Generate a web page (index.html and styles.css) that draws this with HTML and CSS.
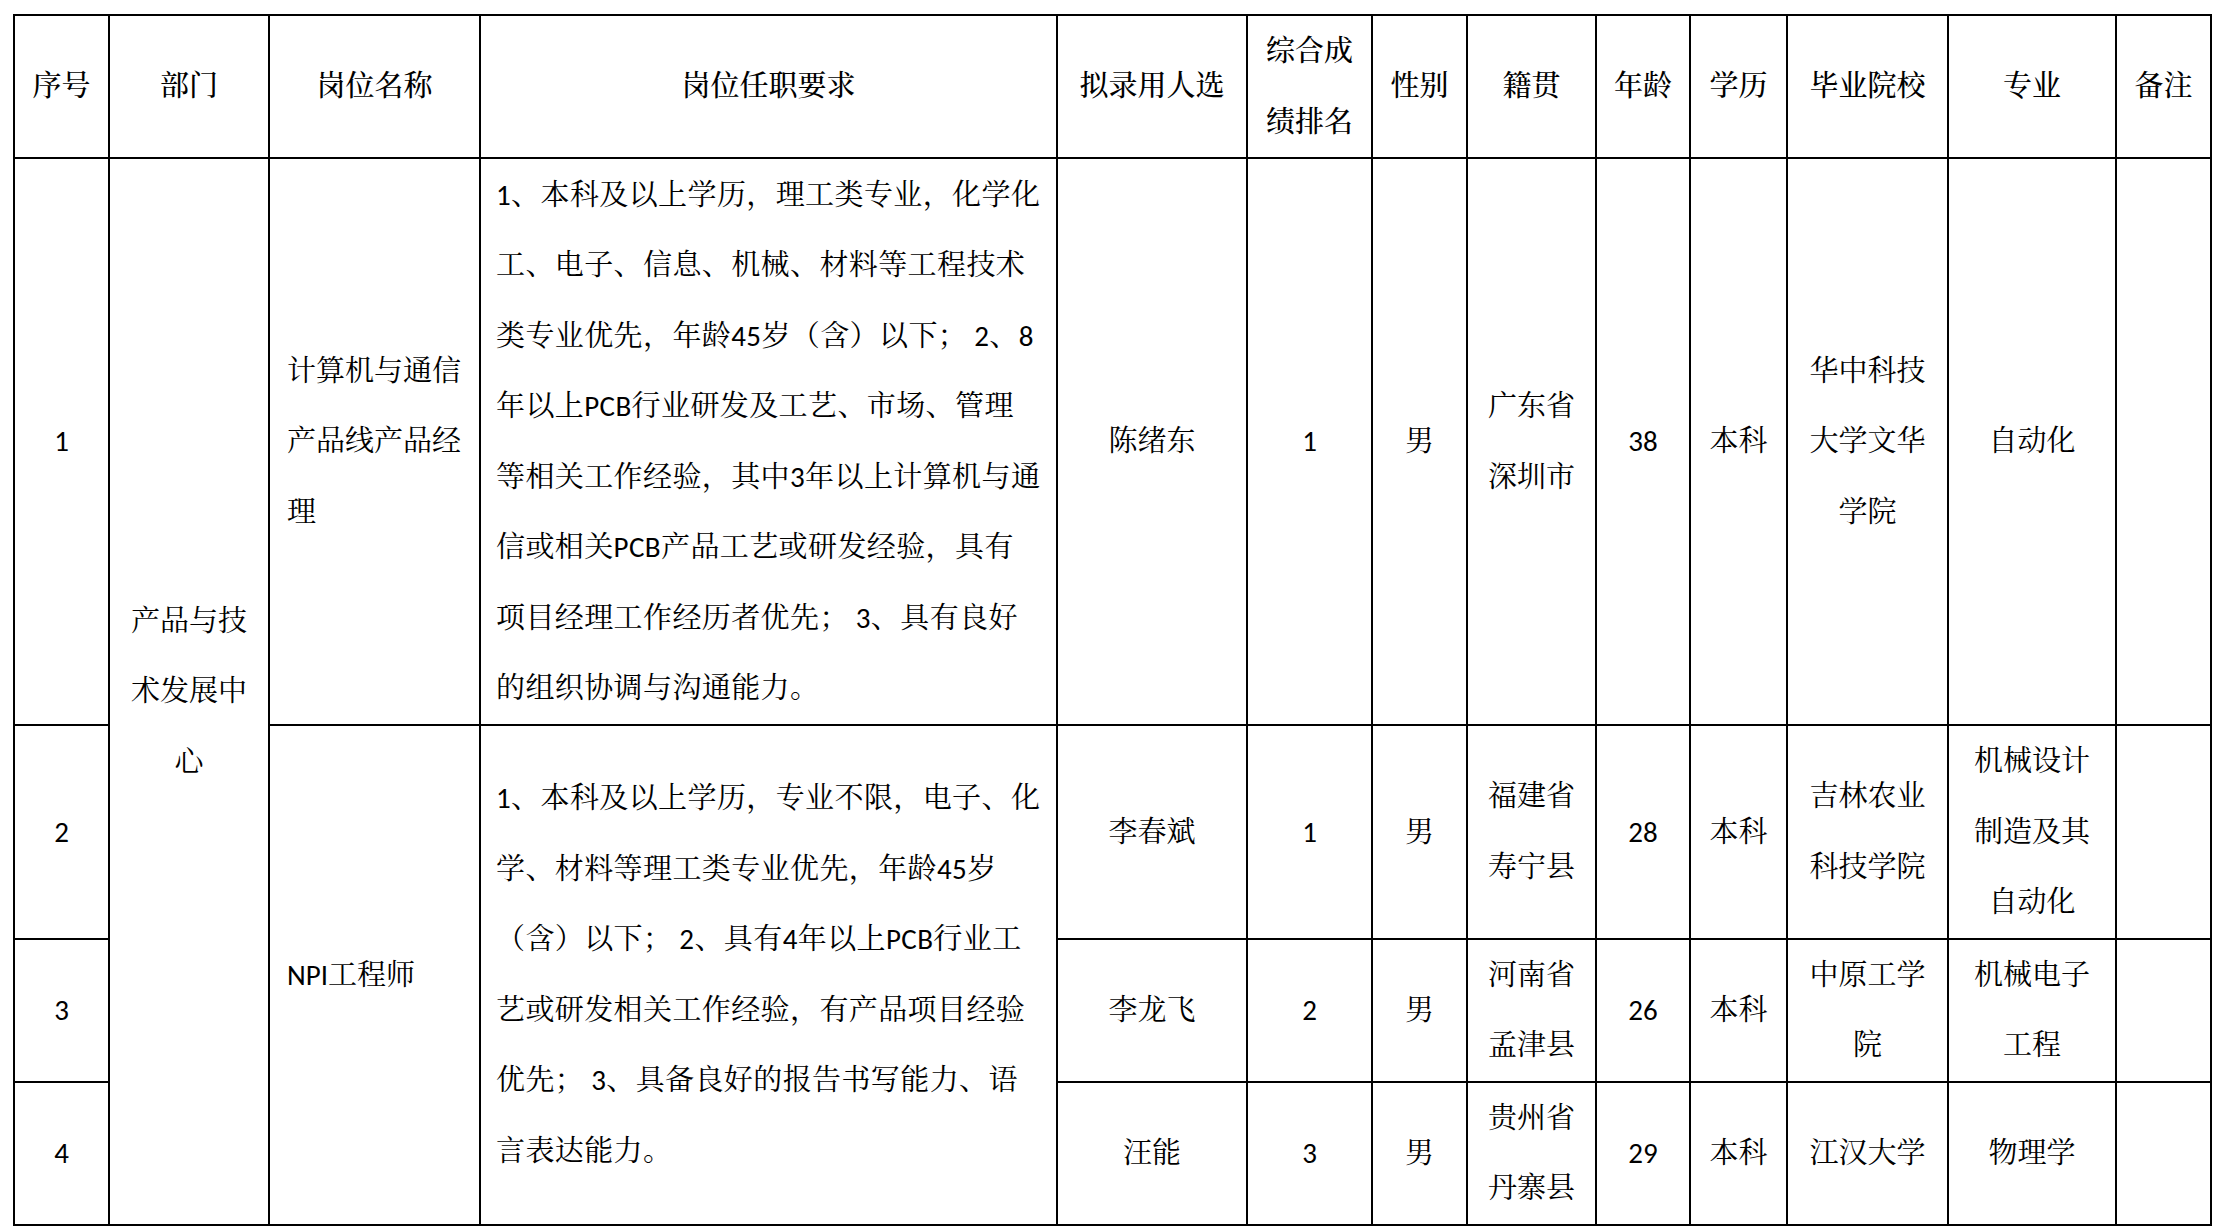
FILE: index.html
```html
<!DOCTYPE html>
<html lang="zh-CN">
<head>
<meta charset="utf-8">
<title>拟录用人选</title>
<link rel="stylesheet" href="styles.css">
</head>
<body>
<table class="grid">
  <colgroup>
    <col class="c-no"><col class="c-dept"><col class="c-post"><col class="c-req"><col class="c-name"><col class="c-rank"><col class="c-sex"><col class="c-home"><col class="c-age"><col class="c-edu"><col class="c-school"><col class="c-major"><col class="c-note">
  </colgroup>
  <thead>
    <tr class="r-head">
      <th>序号</th>
      <th>部门</th>
      <th>岗位名称</th>
      <th>岗位任职要求</th>
      <th>拟录用人选</th>
      <th>综合成<br>绩排名</th>
      <th>性别</th>
      <th>籍贯</th>
      <th>年龄</th>
      <th>学历</th>
      <th>毕业院校</th>
      <th>专业</th>
      <th>备注</th>
    </tr>
  </thead>
  <tbody>
    <tr class="r-1">
      <td>1</td>
      <td rowspan="4">产品与技<br>术发展中<br>心</td>
      <td class="left">计算机与通信<br>产品线产品经<br>理</td>
      <td class="left req">1、本科及以上学历，理工类专业，化学化<br>工、电子、信息、机械、材料等工程技术<br>类专业优先，年龄45岁（含）以下； 2、8<br>年以上PCB行业研发及工艺、市场、管理<br>等相关工作经验，其中3年以上计算机与通<br>信或相关PCB产品工艺或研发经验，具有<br>项目经理工作经历者优先； 3、具有良好<br>的组织协调与沟通能力。</td>
      <td>陈绪东</td>
      <td>1</td>
      <td>男</td>
      <td>广东省<br>深圳市</td>
      <td>38</td>
      <td>本科</td>
      <td>华中科技<br>大学文华<br>学院</td>
      <td>自动化</td>
      <td></td>
    </tr>
    <tr class="r-2">
      <td>2</td>
      <td rowspan="3" class="left">NPI工程师</td>
      <td rowspan="3" class="left req">1、本科及以上学历，专业不限，电子、化<br>学、材料等理工类专业优先，年龄45岁<br>（含）以下； 2、具有4年以上PCB行业工<br>艺或研发相关工作经验，有产品项目经验<br>优先； 3、具备良好的报告书写能力、语<br>言表达能力。</td>
      <td>李春斌</td>
      <td>1</td>
      <td>男</td>
      <td>福建省<br>寿宁县</td>
      <td>28</td>
      <td>本科</td>
      <td>吉林农业<br>科技学院</td>
      <td>机械设计<br>制造及其<br>自动化</td>
      <td></td>
    </tr>
    <tr class="r-3">
      <td>3</td>
      <td>李龙飞</td>
      <td>2</td>
      <td>男</td>
      <td>河南省<br>孟津县</td>
      <td>26</td>
      <td>本科</td>
      <td>中原工学<br>院</td>
      <td>机械电子<br>工程</td>
      <td></td>
    </tr>
    <tr class="r-4">
      <td>4</td>
      <td>汪能</td>
      <td>3</td>
      <td>男</td>
      <td>贵州省<br>丹寨县</td>
      <td>29</td>
      <td>本科</td>
      <td>江汉大学</td>
      <td>物理学</td>
      <td></td>
    </tr>
  </tbody>
</table>
</body>
</html>
```

FILE: styles.css
```css
html, body {
  margin: 0;
  padding: 0;
  background: #ffffff;
}

body {
  padding: 14px 0 0 13px;
  font-family: Carlito, Lato, "Noto Serif CJK SC", "Noto Sans CJK SC", sans-serif;
  font-size: 29px;
  color: #000000;
}

.grid {
  border-collapse: collapse;
  table-layout: fixed;
  width: 2199px;
}

.grid th,
.grid td {
  border: 2px solid #000000;
  padding: 0;
  line-height: 70.5px;
  text-align: center;
  vertical-align: middle;
  white-space: nowrap;
  overflow: hidden;
}

.grid th {
  font-weight: 500;
}

.grid .left {
  text-align: left;
  padding: 0 0 0 17px;
}

.grid .req {
  padding-left: 15px;
  letter-spacing: 0.4px;
}

.c-no { width: 95px; }
.c-dept { width: 160px; }
.c-post { width: 211px; }
.c-req { width: 577px; }
.c-name { width: 190px; }
.c-rank { width: 125px; }
.c-sex { width: 95px; }
.c-home { width: 129px; }
.c-age { width: 94px; }
.c-edu { width: 97px; }
.c-school { width: 161px; }
.c-major { width: 168px; }
.c-note { width: 95px; }

.r-head { height: 142px; }
.r-1 { height: 567px; }
.r-2 { height: 212px; }
.r-3 { height: 142px; }
.r-4 { height: 142px; }
```
